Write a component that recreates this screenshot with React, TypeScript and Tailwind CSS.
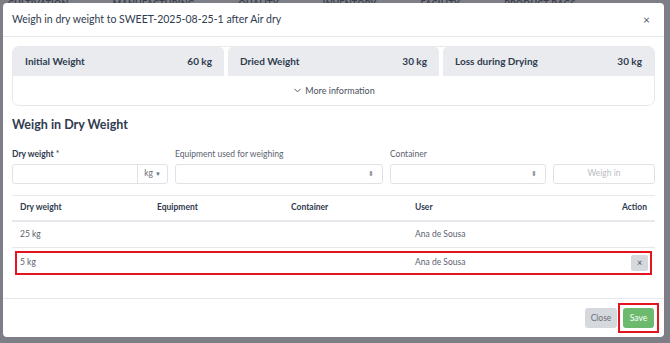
import { ChevronDown } from "lucide-react"

const font = { fontFamily: "Lato, 'Open Sans', sans-serif" }

function Stat({ label, value }: { label: string; value: string }) {
  return (
    <div className="flex h-[29px] flex-1 items-center justify-between rounded-t-[5px] bg-[#e9ebee] px-3 text-[10px] font-bold text-[#2f3b4f]">
      <span>{label}</span>
      <span>{value}</span>
    </div>
  )
}

function SelectBox({ className }: { className: string }) {
  return (
    <div className={`flex h-[20px] items-center justify-end rounded-[3px] border border-[#dfe2e6] bg-white pr-2 ${className}`}>
      <span className="text-[7px] leading-none text-[#8a8f96]">⬍</span>
    </div>
  )
}

export default function App() {
  return (
    <div style={font} className="relative h-[343px] w-[670px] overflow-hidden bg-[#7e7e86]">
      <div className="absolute left-0 top-0 flex gap-[44px] pl-[8px] text-[9px] font-bold leading-[7px] tracking-wide text-[#3d4150]">
        <span>CULTIVATION</span>
        <span>MANUFACTURING</span>
        <span>QUALITY</span>
        <span>INVENTORY</span>
        <span>FACILITY</span>
        <span>PRODUCT BAGS</span>
      </div>

      <div className="absolute left-[3px] top-[3px] flex h-[334px] w-[661px] flex-col rounded-[4px] bg-white">
        <div className="flex h-[34px] shrink-0 items-center justify-between border-b border-[#e6e8eb] pl-[9px] pr-[14px]">
          <span className="text-[10.5px] text-[#2f3b4f]">Weigh in dry weight to SWEET-2025-08-25-1 after Air dry</span>
          <span className="text-[12px] text-[#555b66]">×</span>
        </div>

        <div className="flex flex-1 flex-col px-[9px] pt-[9px]">
          <div className="flex h-[60px] flex-col rounded-[7px] border border-[#e6e8eb]">
            <div className="flex gap-[4px]">
              <Stat label="Initial Weight" value="60 kg" />
              <Stat label="Dried Weight" value="30 kg" />
              <Stat label="Loss during Drying" value="30 kg" />
            </div>
            <div className="flex flex-1 items-center justify-center gap-[2px] text-[9px] text-[#4b5260]">
              <ChevronDown size={11} strokeWidth={2} />
              <span>More information</span>
            </div>
          </div>

          <h2 className="mt-[10px] text-[12.5px] font-bold text-[#2f3b4f]">Weigh in Dry Weight</h2>

          <div className="mt-[13px] flex gap-[7px]">
            <div className="w-[156px]">
              <div className="text-[8.5px] font-bold text-[#2f3b4f]">Dry weight <span className="font-normal">*</span></div>
              <div className="mt-[3px] flex h-[20px] rounded-[3px] border border-[#dfe2e6]">
                <div className="flex-1" />
                <div className="flex w-[30px] items-center justify-center gap-[2px] border-l border-[#dfe2e6] text-[8.5px] text-[#6b717b]">
                  kg <span className="text-[6px]">▼</span>
                </div>
              </div>
            </div>
            <div className="w-[208px]">
              <div className="text-[8.5px] text-[#5b6270]">Equipment used for weighing</div>
              <SelectBox className="mt-[3px] w-full" />
            </div>
            <div className="w-[156px]">
              <div className="text-[8.5px] text-[#5b6270]">Container</div>
              <SelectBox className="mt-[3px] w-full" />
            </div>
            <div className="flex flex-1 flex-col justify-end">
              <div className="flex h-[20px] items-center justify-center rounded-[3px] border border-[#dfe2e6] text-[8.5px] text-[#b9bdc3]">
                Weigh in
              </div>
            </div>
          </div>

          <div className="mt-[11px] border-t border-[#e6e8eb]" />

          <div className="grid h-[26px] grid-cols-[137px_134px_124px_1fr_60px] items-center border-b-2 border-[#e6e8eb] px-[8px] text-[8.5px] font-bold text-[#2f3b4f]">
            <span>Dry weight</span>
            <span>Equipment</span>
            <span>Container</span>
            <span>User</span>
            <span className="text-right">Action</span>
          </div>
          <div className="grid h-[26px] grid-cols-[137px_134px_124px_1fr_60px] items-center border-b border-[#e6e8eb] px-[8px] text-[8.5px] text-[#5b6270]">
            <span>25 kg</span>
            <span />
            <span />
            <span>Ana de Sousa</span>
            <span />
          </div>
          <div className="mx-[3px] mt-[3px] grid h-[24px] grid-cols-[137px_134px_124px_1fr_60px] items-center border-2 border-[#e4151f] pl-[3px] pr-[2px] text-[8.5px] text-[#5b6270]">
            <span>5 kg</span>
            <span />
            <span />
            <span>Ana de Sousa</span>
            <span className="flex justify-end">
              <span className="flex h-[16px] w-[17px] items-center justify-center rounded-[2px] bg-[#d5d8dc] text-[9px] text-[#4b5260]">×</span>
            </span>
          </div>
        </div>

        <div className="flex h-[39px] shrink-0 items-center justify-end gap-[1px] border-t border-[#e6e8eb] pr-[5px]">
          <div className="flex h-[20px] w-[32px] items-center justify-center rounded-[3px] bg-[#d5d8dc] text-[8.5px] text-[#6b717b]">Close</div>
          <div className="flex h-[30px] w-[41px] items-center justify-center border-2 border-[#e4151f]">
            <div className="flex h-[20px] w-[31px] items-center justify-center rounded-[3px] bg-[#6dba6f] text-[8.5px] text-white">Save</div>
          </div>
        </div>
      </div>
    </div>
  )
}
